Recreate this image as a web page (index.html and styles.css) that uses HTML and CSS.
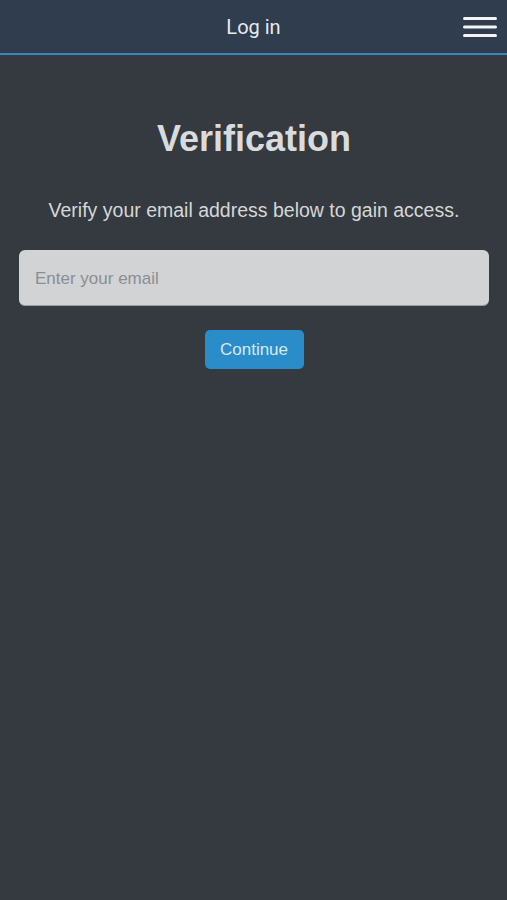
FILE: index.html
```html
<!DOCTYPE html>
<html>
<head>
<meta charset="utf-8" />
<title>Log in</title>
<link rel="stylesheet" href="styles.css">
</head>
<body>
<div class="topBar">
    <span class="topTitle">Log in</span>
    <a class="menuBtn">
        <svg width="34" height="20" viewBox="0 0 34 20">
            <rect x="0" y="0" width="34" height="3" rx="1.5" fill="#f2f4f6" />
            <rect x="0" y="8.5" width="34" height="3" rx="1.5" fill="#f2f4f6" />
            <rect x="0" y="17" width="34" height="3" rx="1.5" fill="#f2f4f6" />
        </svg>
    </a>
</div>
<div class="main">
    <h1 class="title">Verification</h1>
    <p class="desc">Verify your email address below to gain access.</p>
    <input class="emailInput" type="text" placeholder="Enter your email" />
    <button class="btn">Continue</button>
</div>
</body>
</html>
```

FILE: styles.css
```css
*{margin:0; padding:0; box-sizing:border-box;}
html,body{height:100%;}
body{background:#343a3f; font-family:"Liberation Sans", Arial, sans-serif; color:#d5d7d9;}
.topBar{height:55px; background:#2f3d4f; border-bottom:2px solid #3a86b8; display:flex; align-items:center; justify-content:center; position:relative;}
.topTitle{font-family:Roboto, sans-serif; font-size:20px; color:#e8eaec;}
.menuBtn{position:absolute; right:10px; top:17px; display:block; height:20px;}
.menuBtn svg{display:block;}
.main{display:flex; flex-direction:column; align-items:center; padding:0 18px 0 19px;}
.title{font-size:36px; font-weight:bold; margin-top:63px; line-height:42px; color:#d9dbdd;}
.desc{font-size:19.5px; margin-top:38px; line-height:24px;}
.emailInput{width:470px; height:56px; margin-top:28px; border:none; border-bottom:1px solid #9a9ea2; border-radius:6px; background:#d1d3d5; padding:2px 16px 0; font-family:"Liberation Sans", Arial, sans-serif; font-size:17px; color:#333; outline:none;}
.emailInput::placeholder{color:#8b8e91;}
.btn{margin-top:24px; width:99px; height:39px; border:none; border-radius:5px; background:#2a8dc9; color:#d8e8f2; font-family:"Liberation Sans", Arial, sans-serif; font-size:17px;}
```
